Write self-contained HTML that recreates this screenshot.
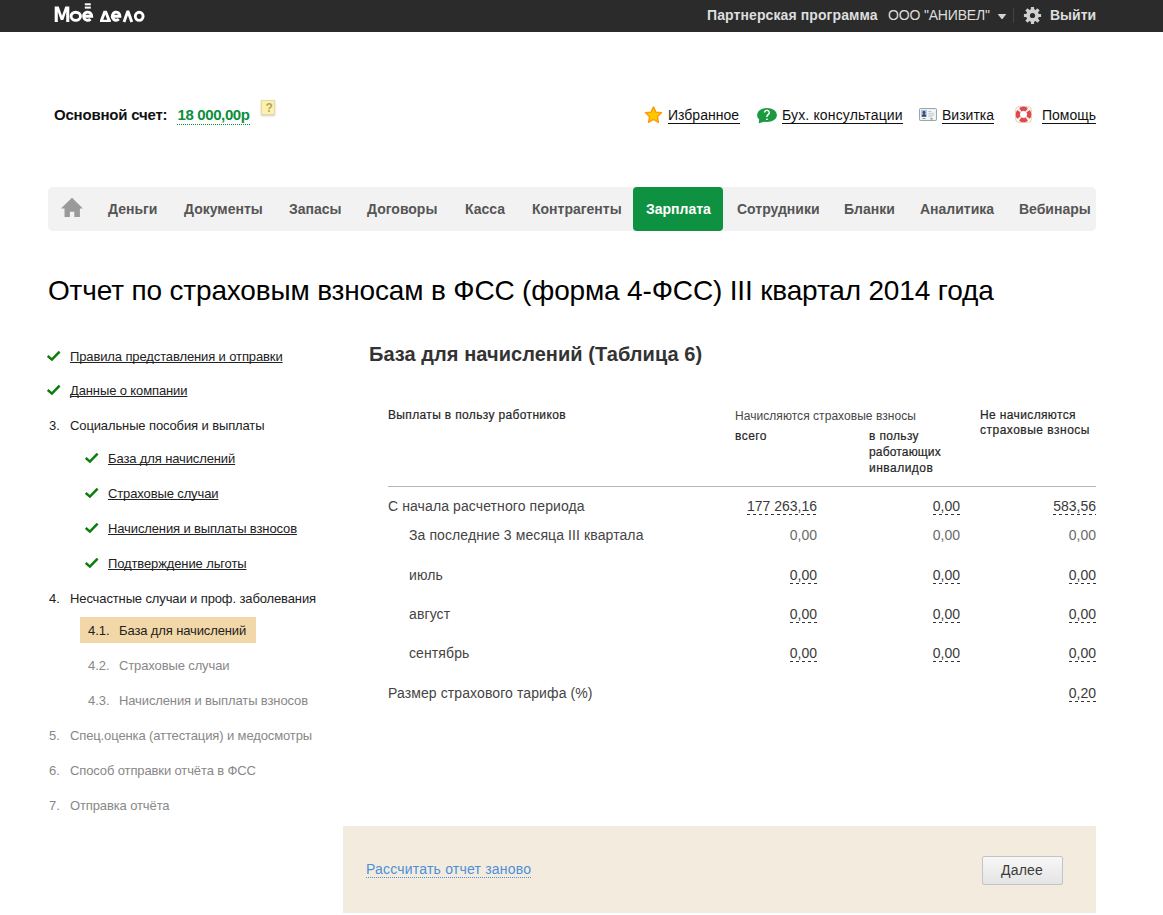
<!DOCTYPE html>
<html><head><meta charset="utf-8"><title>Отчет</title>
<style>
html,body{margin:0;padding:0;background:#fff;width:1163px;height:915px;overflow:hidden;position:relative;font-family:"Liberation Sans", sans-serif;}
div{font-family:"Liberation Sans", sans-serif;}
</style></head><body>
<div style="position:absolute;left:0px;top:0px;width:1163px;height:32px;background:#2b2b2b;"></div>
<svg style="position:absolute;left:50px;top:0" width="100" height="30" viewBox="0 0 100 30">
<path fill="#fff" d="M4.7 21.9V6.4h4l3.3 9.4 3.3-9.4h4v15.5h-3.1V11.8l-2.9 8.2h-2.6l-2.9-8.2v10.1z"/>
<g fill="none" stroke="#fff" stroke-width="2.9">
<ellipse cx="25.75" cy="16.3" rx="4.7" ry="4.1"/>
<path d="M33.4 16.2h8.3a4.1 4.1 0 1 0-1.2 2.9"/>
<path d="M62.3 16.2h7.6a3.8 4.1 0 1 0-1.1 2.9"/>
<ellipse cx="89.2" cy="16.3" rx="3.9" ry="4.1"/>
<path d="M74 21.9l3.9-10.8 3.9 10.8" stroke-linejoin="bevel"/>
</g>
<g fill="#fff">
<rect x="34.8" y="3.3" width="6" height="2"/>
<rect x="34.8" y="6.6" width="6" height="2"/>
<path fill-rule="evenodd" d="M53.6 10.7h3.2l3.6 9.1h0.4v2.1h-10.8v-2.1h0.2z M53.3 19.8h3.9l-1.95-5.3z"/>
</g>
</svg>
<div style="position:absolute;left:707px;top:8.15px;font-size:14px;line-height:14px;font-weight:700;color:#dedede;white-space:nowrap;letter-spacing:0.1px;">Партнерская программа</div>
<div style="position:absolute;left:888px;top:8.15px;font-size:14px;line-height:14px;font-weight:400;color:#dedede;white-space:nowrap;letter-spacing:-0.17px;">ООО "АНИВЕЛ"</div>
<svg style="position:absolute;left:997px;top:13px" width="10" height="7"><path d="M0.7 1h8.6l-3.8 5h-1z" fill="#d2d2d2"/></svg>
<div style="position:absolute;left:1013px;top:8px;width:1px;height:15px;background:#444;"></div>
<svg style="position:absolute;left:1023px;top:6px" width="19" height="19" viewBox="0 0 19 19">
<g fill="#d0d0d0" transform="translate(9.5 9.5)">
<circle r="6.4"/>
<rect x="-1.6" y="-8.6" width="3.2" height="17.2" rx="0.4"/>
<rect x="-1.6" y="-8.6" width="3.2" height="17.2" rx="0.4" transform="rotate(45)"/>
<rect x="-1.6" y="-8.6" width="3.2" height="17.2" rx="0.4" transform="rotate(90)"/>
<rect x="-1.6" y="-8.6" width="3.2" height="17.2" rx="0.4" transform="rotate(135)"/>
</g>
<circle cx="9.5" cy="9.5" r="2.6" fill="#2b2b2b"/>
</svg>
<div style="position:absolute;left:1050px;top:8.15px;font-size:14px;line-height:14px;font-weight:700;color:#dedede;white-space:nowrap;">Выйти</div>
<div style="position:absolute;left:54px;top:107.30px;font-size:15px;line-height:15px;font-weight:700;color:#111;white-space:nowrap;letter-spacing:-0.2px;">Основной счет:</div>
<div style="position:absolute;left:177.5px;top:107.30px;font-size:15px;line-height:15px;font-weight:700;color:#0a8f3c;white-space:nowrap;letter-spacing:-0.38px;">18 000,00р</div>
<div style="position:absolute;left:177px;top:124px;width:73px;height:1px;background:repeating-linear-gradient(90deg,#0a8f3c 0 1px,transparent 1px 2px);"></div>
<div style="position:absolute;left:261px;top:100px;width:14px;height:15px;background:#fcf1ac;border:1px solid #e6dba6;box-sizing:border-box;box-shadow:0 1px 2px #ccc;"></div>
<div style="position:absolute;left:265.5px;top:101.84px;font-size:12px;line-height:12px;font-weight:700;color:#b3a45a;white-space:nowrap;">?</div>
<svg style="position:absolute;left:644px;top:105px" width="19" height="19" viewBox="0 0 19 19">
<path d="M9.5 1.9L11.9 7.1 17.6 7.6 13.4 11.7 14.5 17.3 9.5 14.5 4.5 17.3 5.6 11.7 1.4 7.6 7.1 7.1Z" fill="#ffc800" stroke="#fb9a0a" stroke-width="1.4" stroke-linejoin="round"/>
</svg>
<div style="position:absolute;left:668px;top:108.15px;font-size:14px;line-height:14px;font-weight:400;color:#111;white-space:nowrap;">Избранное</div>
<div style="position:absolute;left:668px;top:123px;width:72px;height:1px;background:#111;"></div>
<svg style="position:absolute;left:756px;top:107px" width="22" height="17" viewBox="0 0 22 17">
<ellipse cx="11" cy="8" rx="10" ry="7" fill="#1c9a40"/>
<path d="M3.2 11.5L2.8 16.3 9 14.4Z" fill="#1c9a40"/>
<path d="M8.5 5.6a2.4 2.3 0 1 1 3.8 1.9c-1 .6-1.4 1.2-1.4 2.6" fill="none" stroke="#fff" stroke-width="1.5"/>
<rect x="10.1" y="11.6" width="1.6" height="1.4" fill="#fff"/>
</svg>
<div style="position:absolute;left:782px;top:108.15px;font-size:14px;line-height:14px;font-weight:400;color:#111;white-space:nowrap;letter-spacing:0.15px;">Бух. консультации</div>
<div style="position:absolute;left:782px;top:123px;width:121px;height:1px;background:#111;"></div>
<svg style="position:absolute;left:919px;top:108px" width="18" height="14" viewBox="0 0 18 14">
<rect x="0.5" y="0.5" width="17" height="12" rx="0.8" fill="#e4ecec" stroke="#9ba6a6"/>
<rect x="1.5" y="1.5" width="15" height="10" fill="#f3f7f7"/>
<rect x="2.2" y="2" width="5.6" height="6.8" fill="#9cc0f0"/>
<ellipse cx="5" cy="4.4" rx="1.4" ry="1.7" fill="#4a4a52"/>
<path d="M2.8 8.8c0-1.9.9-2.8 2.2-2.8s2.2.9 2.2 2.8z" fill="#3f4858"/>
<rect x="9.3" y="3" width="3" height="1" fill="#b9c2c2"/>
<rect x="9.3" y="4.8" width="6" height="1" fill="#c3cbcb"/>
<rect x="9.3" y="6.6" width="6" height="1" fill="#c3cbcb"/>
<rect x="9.3" y="8.2" width="4" height="1" fill="#c3cbcb"/>
<rect x="3.5" y="10" width="3" height="1" fill="#8a9494"/>
<rect x="11.5" y="10" width="2" height="1.5" fill="#8a9494"/>
</svg>
<div style="position:absolute;left:942px;top:108.15px;font-size:14px;line-height:14px;font-weight:400;color:#111;white-space:nowrap;">Визитка</div>
<div style="position:absolute;left:942px;top:123px;width:52px;height:1px;background:#111;"></div>
<svg style="position:absolute;left:1015px;top:106px" width="17" height="17" viewBox="0 0 17 17">
<rect x="0.6" y="0.6" width="15.8" height="15.8" rx="3.5" fill="none" stroke="#dcc78e" stroke-width="0.8"/>
<circle cx="8.5" cy="8.4" r="5.5" fill="none" stroke="#eef1f1" stroke-width="4.4"/>
<path d="M13.005 5.245A5.5 5.5 0 0 1 13.005 11.555M11.655 12.905A5.5 5.5 0 0 1 5.345 12.905M3.995 11.555A5.5 5.5 0 0 1 3.995 5.245M5.345 3.895A5.5 5.5 0 0 1 11.655 3.895" fill="none" stroke="#e2474f" stroke-width="4.4"/>
<circle cx="8.5" cy="8.4" r="3.3" fill="none" stroke="#b9c4c4" stroke-width="0.5"/>
<circle cx="8.5" cy="8.4" r="3.2" fill="#fff"/>
</svg>
<div style="position:absolute;left:1042px;top:108.15px;font-size:14px;line-height:14px;font-weight:400;color:#111;white-space:nowrap;">Помощь</div>
<div style="position:absolute;left:1042px;top:123px;width:54px;height:1px;background:#111;"></div>
<div style="position:absolute;left:48px;top:187px;width:1048px;height:44px;background:#f2f2f2;border-radius:5px;"></div>
<svg style="position:absolute;left:60px;top:197px" width="24" height="21" viewBox="0 0 24 21">
<path d="M12 0.7L0.9 11.4H4.5V20H9.9V14.7H14.3V20H19.9V11.4H22.9Z" fill="#9a9a9a"/>
</svg>
<div style="position:absolute;left:633px;top:187px;width:90px;height:44px;background:#0f9142;border-radius:4px;"></div>
<div style="position:absolute;left:108px;top:202.15px;font-size:14px;line-height:14px;font-weight:700;color:#555;white-space:nowrap;">Деньги</div>
<div style="position:absolute;left:184px;top:202.15px;font-size:14px;line-height:14px;font-weight:700;color:#555;white-space:nowrap;">Документы</div>
<div style="position:absolute;left:289px;top:202.15px;font-size:14px;line-height:14px;font-weight:700;color:#555;white-space:nowrap;">Запасы</div>
<div style="position:absolute;left:367px;top:202.15px;font-size:14px;line-height:14px;font-weight:700;color:#555;white-space:nowrap;">Договоры</div>
<div style="position:absolute;left:465px;top:202.15px;font-size:14px;line-height:14px;font-weight:700;color:#555;white-space:nowrap;">Касса</div>
<div style="position:absolute;left:532px;top:202.15px;font-size:14px;line-height:14px;font-weight:700;color:#555;white-space:nowrap;">Контрагенты</div>
<div style="position:absolute;left:646px;top:202.15px;font-size:14px;line-height:14px;font-weight:700;color:#fff;white-space:nowrap;">Зарплата</div>
<div style="position:absolute;left:737px;top:202.15px;font-size:14px;line-height:14px;font-weight:700;color:#555;white-space:nowrap;">Сотрудники</div>
<div style="position:absolute;left:844px;top:202.15px;font-size:14px;line-height:14px;font-weight:700;color:#555;white-space:nowrap;">Бланки</div>
<div style="position:absolute;left:920px;top:202.15px;font-size:14px;line-height:14px;font-weight:700;color:#555;white-space:nowrap;">Аналитика</div>
<div style="position:absolute;left:1019px;top:202.15px;font-size:14px;line-height:14px;font-weight:700;color:#555;white-space:nowrap;">Вебинары</div>
<div style="position:absolute;left:48px;top:277.30px;font-size:28px;line-height:28px;font-weight:400;color:#000;white-space:nowrap;letter-spacing:-0.16px;">Отчет по страховым взносам в ФСС (форма 4-ФСС) III квартал 2014 года</div>
<div style="position:absolute;left:80px;top:617px;width:176px;height:26px;background:#f2d8a8;"></div>
<svg style="position:absolute;left:47px;top:351px" width="14" height="11" viewBox="0 0 14 11"><path d="M0.7 4.9L4.9 8.6 12.6 0.6" fill="none" stroke="#0a7d0a" stroke-width="2.5"/></svg>
<div style="position:absolute;left:70px;top:350.00px;font-size:13px;line-height:13px;font-weight:400;color:#222;white-space:nowrap;letter-spacing:-0.12px;text-decoration:underline;text-underline-offset:1px;text-decoration-skip-ink:none;">Правила представления и отправки</div>
<svg style="position:absolute;left:47px;top:385px" width="14" height="11" viewBox="0 0 14 11"><path d="M0.7 4.9L4.9 8.6 12.6 0.6" fill="none" stroke="#0a7d0a" stroke-width="2.5"/></svg>
<div style="position:absolute;left:70px;top:384.00px;font-size:13px;line-height:13px;font-weight:400;color:#222;white-space:nowrap;letter-spacing:-0.12px;text-decoration:underline;text-underline-offset:1px;text-decoration-skip-ink:none;">Данные о компании</div>
<div style="position:absolute;left:49px;top:419.00px;font-size:13px;line-height:13px;font-weight:400;color:#222;white-space:nowrap;">3.</div>
<div style="position:absolute;left:70px;top:419.00px;font-size:13px;line-height:13px;font-weight:400;color:#222;white-space:nowrap;letter-spacing:-0.12px;">Социальные пособия и выплаты</div>
<svg style="position:absolute;left:85px;top:453px" width="14" height="11" viewBox="0 0 14 11"><path d="M0.7 4.9L4.9 8.6 12.6 0.6" fill="none" stroke="#0a7d0a" stroke-width="2.5"/></svg>
<div style="position:absolute;left:108px;top:452.00px;font-size:13px;line-height:13px;font-weight:400;color:#222;white-space:nowrap;letter-spacing:-0.12px;text-decoration:underline;text-underline-offset:1px;text-decoration-skip-ink:none;">База для начислений</div>
<svg style="position:absolute;left:85px;top:488px" width="14" height="11" viewBox="0 0 14 11"><path d="M0.7 4.9L4.9 8.6 12.6 0.6" fill="none" stroke="#0a7d0a" stroke-width="2.5"/></svg>
<div style="position:absolute;left:108px;top:487.00px;font-size:13px;line-height:13px;font-weight:400;color:#222;white-space:nowrap;letter-spacing:-0.12px;text-decoration:underline;text-underline-offset:1px;text-decoration-skip-ink:none;">Страховые случаи</div>
<svg style="position:absolute;left:85px;top:523px" width="14" height="11" viewBox="0 0 14 11"><path d="M0.7 4.9L4.9 8.6 12.6 0.6" fill="none" stroke="#0a7d0a" stroke-width="2.5"/></svg>
<div style="position:absolute;left:108px;top:522.00px;font-size:13px;line-height:13px;font-weight:400;color:#222;white-space:nowrap;letter-spacing:-0.12px;text-decoration:underline;text-underline-offset:1px;text-decoration-skip-ink:none;">Начисления и выплаты взносов</div>
<svg style="position:absolute;left:85px;top:558px" width="14" height="11" viewBox="0 0 14 11"><path d="M0.7 4.9L4.9 8.6 12.6 0.6" fill="none" stroke="#0a7d0a" stroke-width="2.5"/></svg>
<div style="position:absolute;left:108px;top:557.00px;font-size:13px;line-height:13px;font-weight:400;color:#222;white-space:nowrap;letter-spacing:-0.12px;text-decoration:underline;text-underline-offset:1px;text-decoration-skip-ink:none;">Подтверждение льготы</div>
<div style="position:absolute;left:49px;top:592.00px;font-size:13px;line-height:13px;font-weight:400;color:#222;white-space:nowrap;">4.</div>
<div style="position:absolute;left:70px;top:592.00px;font-size:13px;line-height:13px;font-weight:400;color:#222;white-space:nowrap;letter-spacing:-0.12px;">Несчастные случаи и проф. заболевания</div>
<div style="position:absolute;left:88px;top:624.00px;font-size:13px;line-height:13px;font-weight:400;color:#222;white-space:nowrap;">4.1.</div>
<div style="position:absolute;left:119px;top:624.00px;font-size:13px;line-height:13px;font-weight:400;color:#222;white-space:nowrap;letter-spacing:-0.12px;">База для начислений</div>
<div style="position:absolute;left:88px;top:659.00px;font-size:13px;line-height:13px;font-weight:400;color:#888;white-space:nowrap;">4.2.</div>
<div style="position:absolute;left:119px;top:659.00px;font-size:13px;line-height:13px;font-weight:400;color:#888;white-space:nowrap;letter-spacing:-0.12px;">Страховые случаи</div>
<div style="position:absolute;left:88px;top:694.00px;font-size:13px;line-height:13px;font-weight:400;color:#888;white-space:nowrap;">4.3.</div>
<div style="position:absolute;left:119px;top:694.00px;font-size:13px;line-height:13px;font-weight:400;color:#888;white-space:nowrap;letter-spacing:-0.12px;">Начисления и выплаты взносов</div>
<div style="position:absolute;left:49px;top:729.00px;font-size:13px;line-height:13px;font-weight:400;color:#888;white-space:nowrap;">5.</div>
<div style="position:absolute;left:70px;top:729.00px;font-size:13px;line-height:13px;font-weight:400;color:#888;white-space:nowrap;letter-spacing:-0.12px;">Спец.оценка (аттестация) и медосмотры</div>
<div style="position:absolute;left:49px;top:764.00px;font-size:13px;line-height:13px;font-weight:400;color:#888;white-space:nowrap;">6.</div>
<div style="position:absolute;left:70px;top:764.00px;font-size:13px;line-height:13px;font-weight:400;color:#888;white-space:nowrap;letter-spacing:-0.12px;">Способ отправки отчёта в ФСС</div>
<div style="position:absolute;left:49px;top:799.00px;font-size:13px;line-height:13px;font-weight:400;color:#888;white-space:nowrap;">7.</div>
<div style="position:absolute;left:70px;top:799.00px;font-size:13px;line-height:13px;font-weight:400;color:#888;white-space:nowrap;letter-spacing:-0.12px;">Отправка отчёта</div>
<div style="position:absolute;left:369px;top:344.07px;font-size:20px;line-height:20px;font-weight:700;color:#333;white-space:nowrap;letter-spacing:0.05px;">База для начислений (Таблица 6)</div>
<div style="position:absolute;left:388px;top:408.84px;font-size:12px;line-height:12px;font-weight:400;color:#262626;white-space:nowrap;letter-spacing:0.35px;-webkit-text-stroke:0.2px #262626;">Выплаты в пользу работников</div>
<div style="position:absolute;left:735px;top:409.84px;font-size:12px;line-height:12px;font-weight:400;color:#464646;white-space:nowrap;letter-spacing:0.05px;">Начисляются страховые взносы</div>
<div style="position:absolute;left:735px;top:429.84px;font-size:12px;line-height:12px;font-weight:400;color:#262626;white-space:nowrap;letter-spacing:0.46px;-webkit-text-stroke:0.2px #262626;">всего</div>
<div style="position:absolute;left:869px;top:429.84px;font-size:12px;line-height:12px;font-weight:400;color:#262626;white-space:nowrap;letter-spacing:0.34px;-webkit-text-stroke:0.2px #262626;">в пользу</div>
<div style="position:absolute;left:869px;top:445.84px;font-size:12px;line-height:12px;font-weight:400;color:#262626;white-space:nowrap;letter-spacing:0.16px;-webkit-text-stroke:0.2px #262626;">работающих</div>
<div style="position:absolute;left:869px;top:461.84px;font-size:12px;line-height:12px;font-weight:400;color:#262626;white-space:nowrap;letter-spacing:0.48px;-webkit-text-stroke:0.2px #262626;">инвалидов</div>
<div style="position:absolute;left:980px;top:408.84px;font-size:12px;line-height:12px;font-weight:400;color:#262626;white-space:nowrap;letter-spacing:0.37px;-webkit-text-stroke:0.2px #262626;">Не начисляются</div>
<div style="position:absolute;left:980px;top:424.34px;font-size:12px;line-height:12px;font-weight:400;color:#262626;white-space:nowrap;letter-spacing:0.49px;-webkit-text-stroke:0.2px #262626;">страховые взносы</div>
<div style="position:absolute;left:388px;top:486px;width:708px;height:1px;background:#b5b5b5;"></div>
<div style="position:absolute;left:388px;top:499.15px;font-size:14px;line-height:14px;font-weight:400;color:#444;white-space:nowrap;letter-spacing:0.1px;">С начала расчетного периода</div>
<div style="position:absolute;right:346px;top:499.15px;font-size:14px;line-height:14px;font-weight:400;color:#3a3a3a;white-space:nowrap;">177 263,16</div>
<div style="position:absolute;right:346px;top:514px;height:1px;font-size:14px;color:transparent;white-space:nowrap;background:repeating-linear-gradient(90deg,#333 0 3px,transparent 3px 6px);line-height:1px">177 263,16</div>
<div style="position:absolute;right:203px;top:499.15px;font-size:14px;line-height:14px;font-weight:400;color:#3a3a3a;white-space:nowrap;">0,00</div>
<div style="position:absolute;right:203px;top:514px;height:1px;font-size:14px;color:transparent;white-space:nowrap;background:repeating-linear-gradient(90deg,#333 0 3px,transparent 3px 6px);line-height:1px">0,00</div>
<div style="position:absolute;right:67px;top:499.15px;font-size:14px;line-height:14px;font-weight:400;color:#3a3a3a;white-space:nowrap;">583,56</div>
<div style="position:absolute;right:67px;top:514px;height:1px;font-size:14px;color:transparent;white-space:nowrap;background:repeating-linear-gradient(90deg,#333 0 3px,transparent 3px 6px);line-height:1px">583,56</div>
<div style="position:absolute;left:409px;top:528.15px;font-size:14px;line-height:14px;font-weight:400;color:#444;white-space:nowrap;letter-spacing:0.1px;">За последние 3 месяца III квартала</div>
<div style="position:absolute;right:346px;top:528.15px;font-size:14px;line-height:14px;font-weight:400;color:#6a6a6a;white-space:nowrap;">0,00</div>
<div style="position:absolute;right:203px;top:528.15px;font-size:14px;line-height:14px;font-weight:400;color:#6a6a6a;white-space:nowrap;">0,00</div>
<div style="position:absolute;right:67px;top:528.15px;font-size:14px;line-height:14px;font-weight:400;color:#6a6a6a;white-space:nowrap;">0,00</div>
<div style="position:absolute;left:409px;top:568.15px;font-size:14px;line-height:14px;font-weight:400;color:#444;white-space:nowrap;letter-spacing:0.1px;">июль</div>
<div style="position:absolute;right:346px;top:568.15px;font-size:14px;line-height:14px;font-weight:400;color:#3a3a3a;white-space:nowrap;">0,00</div>
<div style="position:absolute;right:346px;top:583px;height:1px;font-size:14px;color:transparent;white-space:nowrap;background:repeating-linear-gradient(90deg,#333 0 3px,transparent 3px 6px);line-height:1px">0,00</div>
<div style="position:absolute;right:203px;top:568.15px;font-size:14px;line-height:14px;font-weight:400;color:#3a3a3a;white-space:nowrap;">0,00</div>
<div style="position:absolute;right:203px;top:583px;height:1px;font-size:14px;color:transparent;white-space:nowrap;background:repeating-linear-gradient(90deg,#333 0 3px,transparent 3px 6px);line-height:1px">0,00</div>
<div style="position:absolute;right:67px;top:568.15px;font-size:14px;line-height:14px;font-weight:400;color:#3a3a3a;white-space:nowrap;">0,00</div>
<div style="position:absolute;right:67px;top:583px;height:1px;font-size:14px;color:transparent;white-space:nowrap;background:repeating-linear-gradient(90deg,#333 0 3px,transparent 3px 6px);line-height:1px">0,00</div>
<div style="position:absolute;left:409px;top:607.15px;font-size:14px;line-height:14px;font-weight:400;color:#444;white-space:nowrap;letter-spacing:0.1px;">август</div>
<div style="position:absolute;right:346px;top:607.15px;font-size:14px;line-height:14px;font-weight:400;color:#3a3a3a;white-space:nowrap;">0,00</div>
<div style="position:absolute;right:346px;top:622px;height:1px;font-size:14px;color:transparent;white-space:nowrap;background:repeating-linear-gradient(90deg,#333 0 3px,transparent 3px 6px);line-height:1px">0,00</div>
<div style="position:absolute;right:203px;top:607.15px;font-size:14px;line-height:14px;font-weight:400;color:#3a3a3a;white-space:nowrap;">0,00</div>
<div style="position:absolute;right:203px;top:622px;height:1px;font-size:14px;color:transparent;white-space:nowrap;background:repeating-linear-gradient(90deg,#333 0 3px,transparent 3px 6px);line-height:1px">0,00</div>
<div style="position:absolute;right:67px;top:607.15px;font-size:14px;line-height:14px;font-weight:400;color:#3a3a3a;white-space:nowrap;">0,00</div>
<div style="position:absolute;right:67px;top:622px;height:1px;font-size:14px;color:transparent;white-space:nowrap;background:repeating-linear-gradient(90deg,#333 0 3px,transparent 3px 6px);line-height:1px">0,00</div>
<div style="position:absolute;left:409px;top:646.15px;font-size:14px;line-height:14px;font-weight:400;color:#444;white-space:nowrap;letter-spacing:0.1px;">сентябрь</div>
<div style="position:absolute;right:346px;top:646.15px;font-size:14px;line-height:14px;font-weight:400;color:#3a3a3a;white-space:nowrap;">0,00</div>
<div style="position:absolute;right:346px;top:661px;height:1px;font-size:14px;color:transparent;white-space:nowrap;background:repeating-linear-gradient(90deg,#333 0 3px,transparent 3px 6px);line-height:1px">0,00</div>
<div style="position:absolute;right:203px;top:646.15px;font-size:14px;line-height:14px;font-weight:400;color:#3a3a3a;white-space:nowrap;">0,00</div>
<div style="position:absolute;right:203px;top:661px;height:1px;font-size:14px;color:transparent;white-space:nowrap;background:repeating-linear-gradient(90deg,#333 0 3px,transparent 3px 6px);line-height:1px">0,00</div>
<div style="position:absolute;right:67px;top:646.15px;font-size:14px;line-height:14px;font-weight:400;color:#3a3a3a;white-space:nowrap;">0,00</div>
<div style="position:absolute;right:67px;top:661px;height:1px;font-size:14px;color:transparent;white-space:nowrap;background:repeating-linear-gradient(90deg,#333 0 3px,transparent 3px 6px);line-height:1px">0,00</div>
<div style="position:absolute;left:388px;top:686.15px;font-size:14px;line-height:14px;font-weight:400;color:#444;white-space:nowrap;letter-spacing:0.1px;">Размер страхового тарифа (%)</div>
<div style="position:absolute;right:67px;top:686.15px;font-size:14px;line-height:14px;font-weight:400;color:#3a3a3a;white-space:nowrap;">0,20</div>
<div style="position:absolute;right:67px;top:701px;height:1px;font-size:14px;color:transparent;white-space:nowrap;background:repeating-linear-gradient(90deg,#333 0 3px,transparent 3px 6px);line-height:1px">0,20</div>
<div style="position:absolute;left:343px;top:826px;width:753px;height:87px;background:#f4ebdf;"></div>
<div style="position:absolute;left:366px;top:862.15px;font-size:14px;line-height:14px;font-weight:400;color:#4a90d9;white-space:nowrap;letter-spacing:0.2px;">Рассчитать отчет заново</div>
<div style="position:absolute;left:366px;top:877px;width:165px;height:1px;background:repeating-linear-gradient(90deg,#4a90d9 0 1px,transparent 1px 2px);"></div>
<div style="position:absolute;left:982px;top:856px;width:81px;height:29px;background:linear-gradient(#f7f7f7,#e4e4e4);border:1px solid #c4c4c4;border-radius:2px;box-sizing:border-box;"></div>
<div style="position:absolute;left:1001px;top:863.15px;font-size:14px;line-height:14px;font-weight:400;color:#3a3a3a;white-space:nowrap;letter-spacing:0.2px;">Далее</div>
</body></html>
